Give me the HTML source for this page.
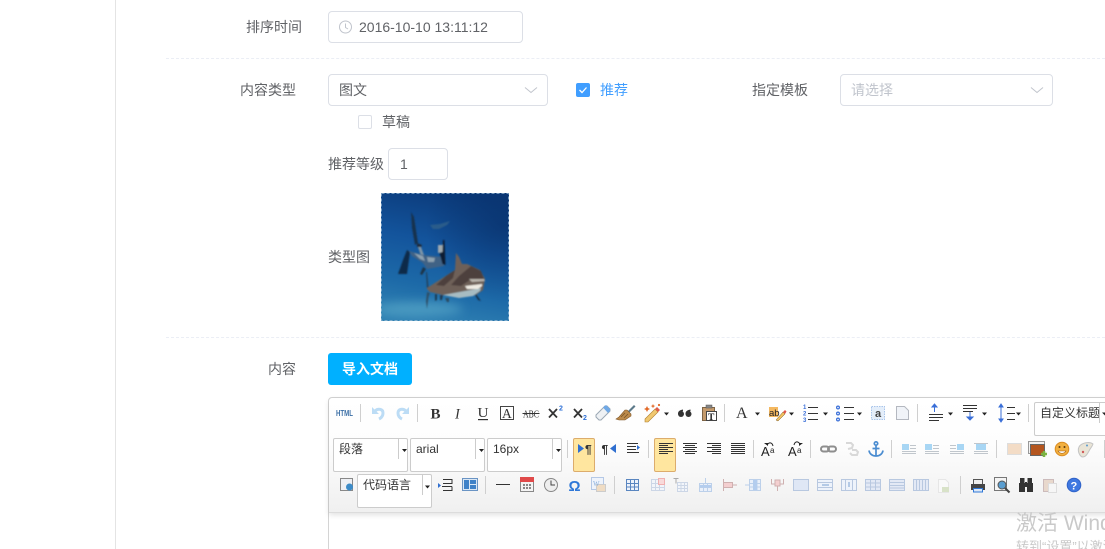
<!DOCTYPE html>
<html><head><meta charset="utf-8"><style>
html,body{margin:0;padding:0;background:#fff;width:1105px;height:549px;overflow:hidden}
#root{position:relative;width:1105px;height:549px;overflow:hidden;font-family:"Liberation Sans","Noto Sans CJK SC",sans-serif;font-size:14px;color:#606266}
.a{position:absolute;white-space:nowrap}
.l{line-height:20px;height:20px}
.box{position:absolute;box-sizing:border-box;border:1px solid #dcdfe6;border-radius:4px;background:#fff}
.sel{position:absolute;box-sizing:border-box;border:1px solid #ccc;border-radius:2px;background:#fff;width:75px;height:34px;color:#333;font-size:12px;line-height:20px;padding-left:5px;white-space:nowrap;overflow:hidden}
.sel:after{content:"";position:absolute;left:64px;top:0;height:20px;width:1px;background:#ccc}
.dash{position:absolute;left:166px;right:0;height:0;border-top:1px dashed #ebeef5}
</style></head><body><div id="root">
<div class="a" style="left:115px;top:0;width:1px;height:549px;background:#e4e4e4"></div>
<div class="a l" style="left:246px;top:17px">排序时间</div>
<div class="box" style="left:328px;top:11px;width:195px;height:32px"></div>
<div class="a l" style="left:359px;top:17px">2016-10-10 13:11:12</div>
<div class="dash" style="top:58px"></div>
<div class="a l" style="left:240px;top:80px">内容类型</div>
<div class="box" style="left:328px;top:74px;width:220px;height:32px"></div>
<div class="a l" style="left:339px;top:80px">图文</div>
<div class="a" style="left:576px;top:83px;width:14px;height:14px;background:#409eff;border-radius:2px"></div>
<div class="a l" style="left:600px;top:80px;color:#409eff">推荐</div>
<div class="a l" style="left:752px;top:80px">指定模板</div>
<div class="box" style="left:840px;top:74px;width:213px;height:32px"></div>
<div class="a l" style="left:851px;top:80px;color:#c0c4cc">请选择</div>
<div class="a" style="left:358px;top:115px;width:14px;height:14px;box-sizing:border-box;border:1px solid #dcdfe6;border-radius:2px"></div>
<div class="a l" style="left:382px;top:112px">草稿</div>
<div class="a l" style="left:328px;top:154px">推荐等级</div>
<div class="box" style="left:388px;top:148px;width:60px;height:32px"></div>
<div class="a l" style="left:400px;top:154px">1</div>
<div class="a l" style="left:328px;top:247px">类型图</div>

<svg class="a" style="left:381px;top:193px" width="128" height="128" viewBox="0 0 128 128">
<defs><linearGradient id="sea" x1="0.6" y1="0" x2="0.4" y2="1"><stop offset="0" stop-color="#0b3a7a"/><stop offset=".4" stop-color="#13549c"/><stop offset=".75" stop-color="#1d6aa8"/><stop offset="1" stop-color="#2f80b2"/></linearGradient>
<radialGradient id="vg" cx=".95" cy=".25" r=".6"><stop offset="0" stop-color="#082f68" stop-opacity=".6"/><stop offset="1" stop-color="#082f68" stop-opacity="0"/></radialGradient>
<filter id="bl" x="-10%" y="-10%" width="120%" height="120%"><feGaussianBlur stdDeviation=".8"/></filter><filter id="bl2" x="-30%" y="-100%" width="160%" height="300%"><feGaussianBlur stdDeviation="5"/></filter></defs>
<rect width="128" height="128" fill="url(#sea)"/>
<rect width="128" height="128" fill="url(#vg)"/>
<ellipse cx="38" cy="116" rx="44" ry="7" fill="#5cabca" opacity=".65" filter="url(#bl2)"/>
<g filter="url(#bl)">
<path d="M49 32l10-1 10-3-3 4-8 4-6 0z" fill="#2e5f8a" opacity=".85"/>
<path d="M30 19l3 5 4 26-3 2-3-17z" fill="#16304e"/>
<path d="M36 50l5 2-1 3-4-1z" fill="#1a2c3e"/>
<path d="M37 54l3 0 3 8-3 1z" fill="#7e94a6"/>
<path d="M17 81l9 0 3-22 -3-2-4 10z" fill="#10294a"/>
<path d="M28 58l14 4 19 2 2 9-17 3-4-6-11-7z" fill="#3f6285"/>
<path d="M33 60l9 3 2 5-5-2zM46 64l8 1-1 4-6 0z" fill="#8ea2b0"/>
<path d="M42 74l3 2-4 6-2-1z" fill="#1e3448"/>
<path d="M57 52h5v7l-5 1z" fill="#a0aab0"/>
<path d="M62 47l1.500 0 1 25-3-1-3-11 3-1z" fill="#0c1c30"/>
<path d="M45 79l1 0 1.500 15-1.500 2z" fill="#22405a"/>
<path d="M49 100l-1.500 4-1.500 12-1-8 1-9z" fill="#2d5068"/>
<path d="M46 95l28-18 1-17 3 4 3 7 5 0 13 6 5 9-2 11-7 5-16 2-17-2-13-3-3-3z" fill="#6e6058"/>
<path d="M55 92l10-9 9-6-2 8-9 8zM70 92l8-9 12-10 10 5 3 8-14 1-9 6z" fill="#4d413c"/>
<path d="M62 102l22-4 16-3-1 3-7 5-14 2z" fill="#a7bcc2"/>
<path d="M84 93l17-2 0 2-4 3-11 0z" fill="#efebe3"/>
<path d="M88 86l15 0 1 2-13 1z" fill="#b9b4ac"/>
<path d="M95 101l5 7-3-1-3-5z" fill="#14304a"/>
<path d="M64 105l4 0 0 4-2 0z" fill="#2b4c62"/>
<path d="M54 101l2 0 0 6-2 1zM59 102l3 0-1 5-2 0z" fill="#1e3a52"/>
</g>
<rect x=".5" y=".5" width="127" height="127" fill="none" stroke="#9fc0d8" stroke-width="1" stroke-dasharray="3 2" opacity=".7"/>
</svg>

<div class="dash" style="top:337px"></div>
<div class="a l" style="left:268px;top:359px">内容</div>
<div class="a" style="left:328px;top:353px;width:84px;height:32px;border-radius:3px;background:#00b0ff;color:#fff;font-size:14px;font-weight:bold;line-height:32px;text-align:center">导入文档</div>

<div class="a" style="left:328px;top:397px;width:790px;height:170px;box-sizing:border-box;border:1px solid #d4d4d4;border-radius:4px 0 0 0;background:#fff"></div>
<div class="a" style="left:329px;top:398px;width:790px;height:114px;background:linear-gradient(#fff 0,#fdfdfd 40%,#f0f0f0 100%);border-bottom:1px solid #dcdcdc;box-shadow:0 2px 6px rgba(0,0,0,.12);border-radius:4px 0 0 0"></div>

<div class="a" style="left:1034px;top:402px;width:80px;height:34px;box-sizing:border-box;border:1px solid #ccc;border-radius:2px;background:#fff;font-size:12px;line-height:20px;color:#333;padding-left:5px;overflow:hidden">自定义标题</div>
<div class="a" style="left:1099px;top:403px;width:6px;height:32px;background:#fff"></div>
<div class="a" style="left:1099px;top:403px;width:1px;height:20px;background:#ccc"></div>
<div class="sel" style="left:333px;top:438px">段落</div>
<div class="sel" style="left:410px;top:438px">arial</div>
<div class="sel" style="left:487px;top:438px">16px</div>
<div class="sel" style="left:357px;top:474px">代码语言</div>
<div class="a" style="left:573px;top:438px;width:22px;height:34px;box-sizing:border-box;background:#ffe69f;border:1px solid #dcac6c;border-radius:2px"></div>
<div class="a" style="left:654px;top:438px;width:22px;height:34px;box-sizing:border-box;background:#ffe69f;border:1px solid #dcac6c;border-radius:2px"></div>

<div class="a" style="left:1016px;top:511px;font-size:21px;color:#c9c9c9;line-height:26px">激活 Wind</div>
<div class="a" style="left:1016px;top:538px;font-size:13px;color:#c9c9c9;line-height:18px">转到“设置”以激活</div>

<svg class="a" style="left:0;top:0" width="1105" height="549" viewBox="0 0 1105 549" font-family="'Liberation Serif',serif">
<g fill="none" stroke="#c0c4cc">
<circle cx="345.500" cy="27" r="6"/><path d="M345.500 23.500V27.500L348 29"/>
<path d="M525 87.500l6 5 6-5M1031 87.500l6 5 6-5"/>
</g>
<path d="M579.500 90l2.500 2.500 4.500-5" fill="none" stroke="#fff" stroke-width="1.300"/>

<g stroke="#cfcfcf">
<path d="M360.500 404v18M417.500 404v18M724.500 404v18M917.500 404v18M1028.500 404v18"/>
<path d="M567.500 440v18M648.500 440v18M753.500 440v18M810.500 440v18M891.500 440v18M996.500 440v18M1104.500 440v18"/>
<path d="M485.500 476v18M614.500 476v18M960.500 476v18"/>
</g>
<g fill="#222">
<path d="M402 449h5l-2.500 3zM479 449h5l-2.500 3zM556 449h5l-2.500 3zM425 485.500h5l-2.500 3z"/>
<path d="M664 412.500h5l-2.500 3zM755 412.500h5l-2.500 3zM789 412.500h5l-2.500 3zM823 412.500h5l-2.500 3zM857 412.500h5l-2.500 3zM948 412.500h5l-2.500 3zM982 412.500h5l-2.500 3zM1016 412.500h5l-2.500 3zM1102 412.500h3v3z"/>
</g>

<!-- row 1 -->
<text x="336" y="416" font-family="'Liberation Sans',sans-serif" font-size="8" font-weight="bold" fill="#3a6ea5" textLength="17" lengthAdjust="spacingAndGlyphs">HTML</text>
<g fill="none" stroke="#bcdcf5" stroke-width="3">
<path d="M375 411c3-3 8-2 8 2 0 3-2 5-4 6"/><path d="M406 411c-3-3-8-2-8 2 0 3 2 5 4 6"/>
</g>
<path d="M372 407v7h7zM409 407v7h-7z" fill="#bcdcf5"/>
<g fill="#333" font-size="15">
<text x="430.500" y="418.500" font-weight="bold">B</text>
<text x="455" y="418.500" font-style="italic" font-size="14.500">I</text>
<text x="477.500" y="417" font-size="14" textLength="11" lengthAdjust="spacingAndGlyphs">U</text><path d="M478 419h10v1.200h-10z"/>
<rect x="500.500" y="406.500" width="13" height="13" fill="none" stroke="#444"/>
<text x="502" y="418" font-size="13.500">A</text>
<text x="523" y="417.500" font-size="11" textLength="16" lengthAdjust="spacingAndGlyphs">ABC</text><path d="M522.500 413h17v1h-17z"/>
</g>
<g fill="none" stroke="#333" stroke-width="1.800">
<path d="M549 409l8 8.500M557 409l-8 8.500M574 409l8 8.500M582 409l-8 8.500"/>
</g>
<text x="559" y="410.500" font-size="7" font-weight="bold" fill="#2c6fd6" font-family="'Liberation Sans',sans-serif">2</text>
<text x="583" y="420" font-size="7" font-weight="bold" fill="#2c6fd6" font-family="'Liberation Sans',sans-serif">2</text>
<path d="M596 415l9-9 2 0 3 3 0 2-9 9-2 0-3-3z" fill="#eef1f4" stroke="#9aa7b3"/><path d="M603 407.500l3-2.500 4 4 0 2-2 2z" fill="#6fa8e6"/>
<path d="M627 412l7-7 1.500 1.500-7 7z" fill="#5d7a8a"/><path d="M619 417l6-7 2 0 4 4 0 2-6 4-6 0-3-1z" fill="#bc8a4a" stroke="#80582a" stroke-width=".6"/><path d="M621 417l4-4M624 418l4-4" stroke="#7a5526" stroke-width=".8"/>
<path d="M645 419l10-10 3 3-10 10-3 0z" fill="#f0c870" stroke="#b07f2d" stroke-width=".6"/><path d="M655 409l2-2 3 3-2 2z" fill="#e05c4a"/>
<path d="M647 406l1 2 2 1-2 1-1 2-1-2-2-1 2-1zM653 404l.7 1.500 1.500.5-1.500.7-.7 1.500-.7-1.500-1.500-.7 1.500-.5z" fill="#e26a28"/><circle cx="659" cy="405" r="1.100" fill="#e26a28"/>
<g fill="#333"><circle cx="681" cy="414" r="3"/><circle cx="688.500" cy="414" r="3"/><path d="M678 414c0-3 2-4 5-4.500l0 1.500-2 2zM685.500 414c0-3 2-4 5-4.500l0 1.500-2 2z"/></g>
<rect x="702.500" y="407.500" width="12" height="13" fill="#c49a6c" stroke="#7e6445"/><rect x="706" y="405" width="6" height="3" fill="#888" stroke="#555" stroke-width=".5"/>
<rect x="706.500" y="411.500" width="10" height="9" fill="#fff" stroke="#444"/><text x="708" y="420" font-size="9.500" font-weight="bold" fill="#222">T</text>
<text x="736" y="418" font-size="16" fill="#333">A</text>
<rect x="769" y="407" width="9" height="10" fill="#f4b860"/><text x="769" y="416" font-size="9.500" fill="#222" font-family="'Liberation Sans',sans-serif">ab</text>
<path d="M776 420l7-8 2 2-7 7z" fill="#f0c060" stroke="#7a5a25" stroke-width=".5"/><path d="M783 412l2-2 1.500 1.500-1.500 2.500z" fill="#e0554a"/>
<g stroke="#333"><path d="M808 407.500h10M808 413.500h10M808 419.500h10M844 407.500h10M844 413.500h10M844 419.500h10"/></g>
<g fill="#3a6fd8" font-size="6" font-family="'Liberation Sans',sans-serif" font-weight="bold"><text x="803" y="409">1</text><text x="803" y="415.500">2</text><text x="803" y="422">3</text></g>
<g fill="none" stroke="#3a6fd8" stroke-width="1.200"><circle cx="838" cy="407.500" r="1.400"/><circle cx="838" cy="413.500" r="1.400"/><circle cx="838" cy="419.500" r="1.400"/></g>
<rect x="871.500" y="406.500" width="13" height="13" fill="#e4eefa" stroke="#a8c4ea" stroke-dasharray="1.500 1"/><text x="875" y="417" font-size="11" font-weight="bold" fill="#444" font-family="'Liberation Sans',sans-serif">a</text>
<path d="M896.500 406.500h8l4 4v9h-12z" fill="#f0f3f8" stroke="#b4b8c0"/>
<g stroke="#333"><path d="M929 414.500h14M929 417.500h14M929 420.500h10M963 405.500h14M963 408.500h14M963 411.500h10M1007 407.500h8M1007 413.500h8M1007 419.500h8"/></g>
<g stroke="#3a6fd8" fill="#3a6fd8"><path d="M934.500 406v6" /><path d="M932 407l2.500-3 2.500 3zM967 417l3 3 3-3z"/><path d="M970 412v6" fill="none"/><path d="M1001 406v14" fill="none"/><path d="M999 407l2-3 2 3zM999 419l2 3 2-3z"/></g>

<!-- row 2 -->
<path d="M578 444l6 4.500-6 4.500z" fill="#2f6fd0"/><text x="585" y="453.500" font-size="12" fill="#333" font-family="'Liberation Sans',sans-serif" font-weight="bold">¶</text>
<text x="601.500" y="453.500" font-size="12" fill="#333" font-family="'Liberation Sans',sans-serif" font-weight="bold">¶</text><path d="M616 444l-6 4.500 6 4.500z" fill="#2f6fd0"/>
<g stroke="#333"><path d="M627 443.500h11M627 446.500h9M627 449.500h9M627 452.500h12"/></g><path d="M637 445l3 2.500-3 2.500z" fill="#2f6fd0"/>
<g stroke="#333" stroke-width="1">
<path d="M659 443.500h14M659 445.500h9M659 447.500h14M659 449.500h9M659 451.500h14M659 453.500h9"/>
<path d="M683 443.500h14M685 445.500h10M683 447.500h14M685 449.500h10M683 451.500h14M685 453.500h10"/>
<path d="M707 443.500h14M712 445.500h9M707 447.500h14M712 449.500h9M707 451.500h14M712 453.500h9"/>
<path d="M731 443.500h14M731 445.500h14M731 447.500h14M731 449.500h14M731 451.500h14M731 453.500h14"/>
</g>
<g fill="#222" font-family="'Liberation Sans',sans-serif">
<text x="761" y="456" font-size="13">A</text><text x="770" y="453" font-size="8">a</text>
<text x="788" y="456" font-size="13">A</text><text x="797" y="453" font-size="8">a</text>
</g>
<g fill="none" stroke="#222"><path d="M767 445c2-3 5-3 6 1M794 445c1-4 4-4 6-1"/></g><path d="M764 443h4v3zM803 443h-4v3z" fill="#222"/>
<g fill="none" stroke="#8e8e8e" stroke-width="2"><rect x="821" y="446.500" width="8" height="5" rx="2.500"/><rect x="828" y="446.500" width="8" height="5" rx="2.500"/></g>
<g fill="none" stroke="#d8d8d8" stroke-width="2"><path d="M846 443h5l2 2-1 3-4 1M852 450h4l2 2-1 3-5 0-2-2"/></g>
<g fill="none" stroke="#4a8cd0" stroke-width="1.700"><circle cx="876" cy="443.500" r="1.700"/><path d="M876 445.500v10.500M872.500 448.500h7M869 450.500c.5 3.500 3.500 5.500 7 5.500s6.500-2 7-5.500"/></g>
<g fill="#a8d6f4"><rect x="902" y="444" width="7" height="6"/><rect x="925" y="444" width="7" height="6"/><rect x="957" y="444" width="7" height="6"/><rect x="976" y="444" width="10" height="6"/></g>
<g stroke="#c0c6cc"><path d="M910 445.500h6M910 448.500h6M902 451.500h14M902 453.500h14M933 445.500h6M933 448.500h6M925 451.500h14M925 453.500h14M950 445.500h6M950 448.500h6M950 451.500h14M950 453.500h14M974 443.500h14M974 451.500h14M974 453.500h14"/></g>
<rect x="1007.500" y="443.500" width="14" height="11" fill="#f3dcc6" stroke="#ddd"/>
<rect x="1028.500" y="441.500" width="16" height="12" fill="#f2f2f2" stroke="#999"/><rect x="1030.500" y="444.500" width="14" height="11" fill="#b4561f" stroke="#666"/><path d="M1044 451v6M1041 454h6" stroke="#7cb342" stroke-width="2.500"/>
<circle cx="1062" cy="449" r="6.800" fill="#f2b040" stroke="#d98a20"/><circle cx="1059.500" cy="447" r="1" fill="#5a3a10"/><circle cx="1064.500" cy="447" r="1" fill="#5a3a10"/><path d="M1058 451c2 3 6 3 8 0z" fill="#fff" stroke="#a05a10" stroke-width=".6"/>
<path d="M1079 447c2-4 10-6 14-3-1 3-2 3-4 7-2 4-4 6-6 6-3 0-6-6-4-10z" fill="#e9e4d6" stroke="#c4c4c4"/><circle cx="1087" cy="445.500" r="1" fill="#5a9ad0"/><circle cx="1083" cy="452" r="1.200" fill="#d05a5a"/>

<!-- row 3 -->
<rect x="340.500" y="478.500" width="12" height="12" fill="#eef0f4" stroke="#888"/><circle cx="349.500" cy="487" r="3.500" fill="#3c8bc8"/>
<g stroke="#333" fill="none"><path d="M443 479.500h9v2M443 483.500h9v-2M442 486.500h10M443 490.500h9v-4"/></g><path d="M438 483v5l3-2.500z" fill="#2f6fd0"/>
<rect x="462.500" y="478.500" width="15" height="12" fill="#dbe8f5" stroke="#6a94c4"/><rect x="464" y="480" width="5" height="9" fill="#3f82c8"/><rect x="470" y="480" width="6" height="4" fill="#3f82c8"/><rect x="470" y="485" width="6" height="4" fill="#3f82c8"/>
<path d="M496 484.500h14" stroke="#333"/>
<rect x="520.500" y="477.500" width="13" height="14" fill="#f4f4f4" stroke="#888"/><rect x="520" y="477" width="14" height="5" fill="#e04a4a"/><g fill="#888"><rect x="523" y="484" width="2" height="2"/><rect x="526" y="484" width="2" height="2"/><rect x="529" y="484" width="2" height="2"/><rect x="523" y="487" width="2" height="2"/><rect x="526" y="487" width="2" height="2"/><rect x="529" y="487" width="2" height="2"/></g>
<circle cx="551" cy="485" r="6.500" fill="#eee" stroke="#888"/><path d="M551 480.500v4.500h4" fill="none" stroke="#444"/>
<text x="568.500" y="491" font-size="15" font-weight="bold" fill="#2f78d8" font-family="'Liberation Sans',sans-serif">Ω</text>
<rect x="591.500" y="477.500" width="12" height="12" fill="#eef3fb" stroke="#b4c8e6"/><rect x="596.500" y="484.500" width="9" height="7" fill="#efdcc4" stroke="#ccc"/><text x="593" y="486" font-size="7" fill="#8ab0dd">W</text>
<g fill="none">
<g stroke="#5a86c0"><rect x="626.500" y="479.500" width="12" height="11" fill="#eef3fb"/><path d="M626.500 479.500h12M626.500 483.500h12M626.500 487h12M630.500 480v10M634.500 480v10"/></g>
<g stroke="#ccd6e6"><rect x="651.500" y="479.500" width="13" height="11" fill="#f2f5fa"/><path d="M651.500 483.500h13M651.500 487.500h13M655.500 480v10M659.500 480v10"/></g><rect x="658.500" y="478.500" width="6" height="6" fill="#f8dada" stroke="#f0b0b0"/>
<g stroke="#ccd6e6"><rect x="677.500" y="482.500" width="10" height="9" fill="#f2f5fa"/><path d="M677.500 485.500h10M677.500 488.500h10M681 483v8M684.500 483v8"/></g><path d="M673.500 478.500h5M676 478.500v5" stroke="#aaa"/>
<g stroke="#bcd0ea"><rect x="699.500" y="483.500" width="12" height="8" fill="#eaf0fa"/><path d="M699.500 487.500h12M703.500 484v7M707.500 484v7M705.500 478v5"/></g><rect x="700" y="485" width="11" height="2.500" fill="#b4cdee"/>
<g stroke="#cfb0b0"><rect x="723.500" y="482.500" width="9" height="5" fill="#f4cfd0"/><path d="M732 485h5M723.500 479v12"/></g>
<g stroke="#bcd0ea"><rect x="749.500" y="479.500" width="11" height="11" fill="#eaf0fa"/><path d="M753.500 480v10M757 480v10M749.500 483.500h11M749.500 487h11M745 485h4"/></g><rect x="753" y="480" width="4" height="10" fill="#b4cdee"/>
<g stroke="#cfb0b0"><path d="M771.500 479v5h12v-5M777.500 484v7"/><rect x="775" y="480" width="5" height="6" fill="#f4cfd0"/></g>
<g stroke="#b8c8e0"><rect x="793.500" y="479.500" width="15" height="11" fill="#dfe7f5"/></g>
<g stroke="#b8c8e0"><rect x="817.500" y="479.500" width="15" height="11" fill="#eef3fb"/><path d="M817.500 482.500h15M817.500 487.500h15"/></g><path d="M822 485h7" stroke="#7aa0d0"/>
<g stroke="#b8c8e0"><rect x="841.500" y="479.500" width="15" height="11" fill="#eef3fb"/><path d="M845.500 480v10M852.500 480v10"/></g><path d="M849 482v5" stroke="#7aa0d0"/>
<g stroke="#b8c8e0"><rect x="865.500" y="479.500" width="15" height="11" fill="#e3e9f5"/><path d="M865.500 483h15M865.500 487h15M870.500 480v10M875.500 480v10"/></g>
<g stroke="#b8c8e0"><rect x="889.500" y="479.500" width="15" height="11" fill="#e3e9f5"/><path d="M889.500 482.500h15M889.500 485.500h15M889.500 488h15"/></g>
<g stroke="#b8c8e0"><rect x="913.500" y="479.500" width="15" height="11" fill="#e3e9f5"/><path d="M916.500 480v10M919.500 480v10M922.500 480v10M925.500 480v10"/></g>
</g>
<path d="M938.500 479.500h7l3 3v10h-10z" fill="#f9f9f9" stroke="#e6e6e6"/><rect x="942" y="487" width="7" height="5" fill="#d8e2c8"/>
<rect x="973.500" y="479.500" width="9" height="5" fill="#eee" stroke="#555"/><rect x="971" y="484" width="14" height="6" fill="#444"/><rect x="973.500" y="488.500" width="9" height="3.500" fill="#dde8f6" stroke="#2f78d8"/>
<rect x="994.500" y="477.500" width="12" height="13" fill="#f4f4f4" stroke="#777"/><circle cx="1002" cy="485" r="4" fill="#5a9ed0" stroke="#555"/><path d="M1005 488l4.500 4.500" stroke="#444" stroke-width="2"/>
<g fill="#333"><rect x="1020" y="478" width="4.500" height="5"/><rect x="1027.500" y="478" width="4.500" height="5"/><rect x="1019" y="483" width="6" height="9"/><rect x="1027" y="483" width="6" height="9"/><rect x="1025" y="482" width="2" height="5"/></g>
<rect x="1043.500" y="479.500" width="10" height="12" fill="#e8d8cc" stroke="#cbb"/><rect x="1048.500" y="483.500" width="8" height="9" fill="#f6f6f6" stroke="#ddd"/>
<circle cx="1074" cy="485" r="6.800" fill="#3f78e0" stroke="#2f62c8"/><text x="1070.500" y="489.500" font-size="11" font-weight="bold" fill="#fff" font-family="'Liberation Sans',sans-serif">?</text>
</svg>
</div></body></html>
